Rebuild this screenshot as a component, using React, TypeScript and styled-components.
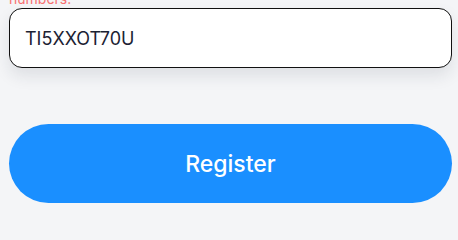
import styled, { createGlobalStyle } from "styled-components";

const Global = createGlobalStyle`
	html, body {
		margin: 0;
		padding: 0;
		background: #f4f5f7;
		font-family: Inter, "Open Sans", sans-serif;
		overflow: hidden;
	}
`;

const Form = styled.div`
	display: flex;
	flex-direction: column;
	padding: 0 6px 0 9px;
	margin-top: -8px;
`;

const ErrorText = styled.p`
	margin: 0;
	height: 16px;
	font-size: 14px;
	line-height: 14px;
	color: #f87171;
`;

const Field = styled.div`
	box-sizing: border-box;
	height: 60px;
	display: flex;
	align-items: center;
	padding: 0 15px;
	background: #ffffff;
	border: 1px solid #111111;
	border-radius: 13px;
	box-shadow: 0 8px 16px rgba(30, 40, 60, 0.1);
	font-size: 18px;
	font-weight: 400;
	color: #1c2233;
`;

const Button = styled.button`
	box-sizing: border-box;
	margin-top: 56px;
	height: 79px;
	border: none;
	border-radius: 40px;
	background: #1a8fff;
	color: #ffffff;
	font-family: Inter, "Open Sans", sans-serif;
	font-size: 23px;
	font-weight: 500;
	cursor: pointer;
`;

export default function App() {
	return (
		<>
			<Global />
			<Form>
				<ErrorText>numbers.</ErrorText>
				<Field>TI5XXOT70U</Field>
				<Button>Register</Button>
			</Form>
		</>
	);
}
